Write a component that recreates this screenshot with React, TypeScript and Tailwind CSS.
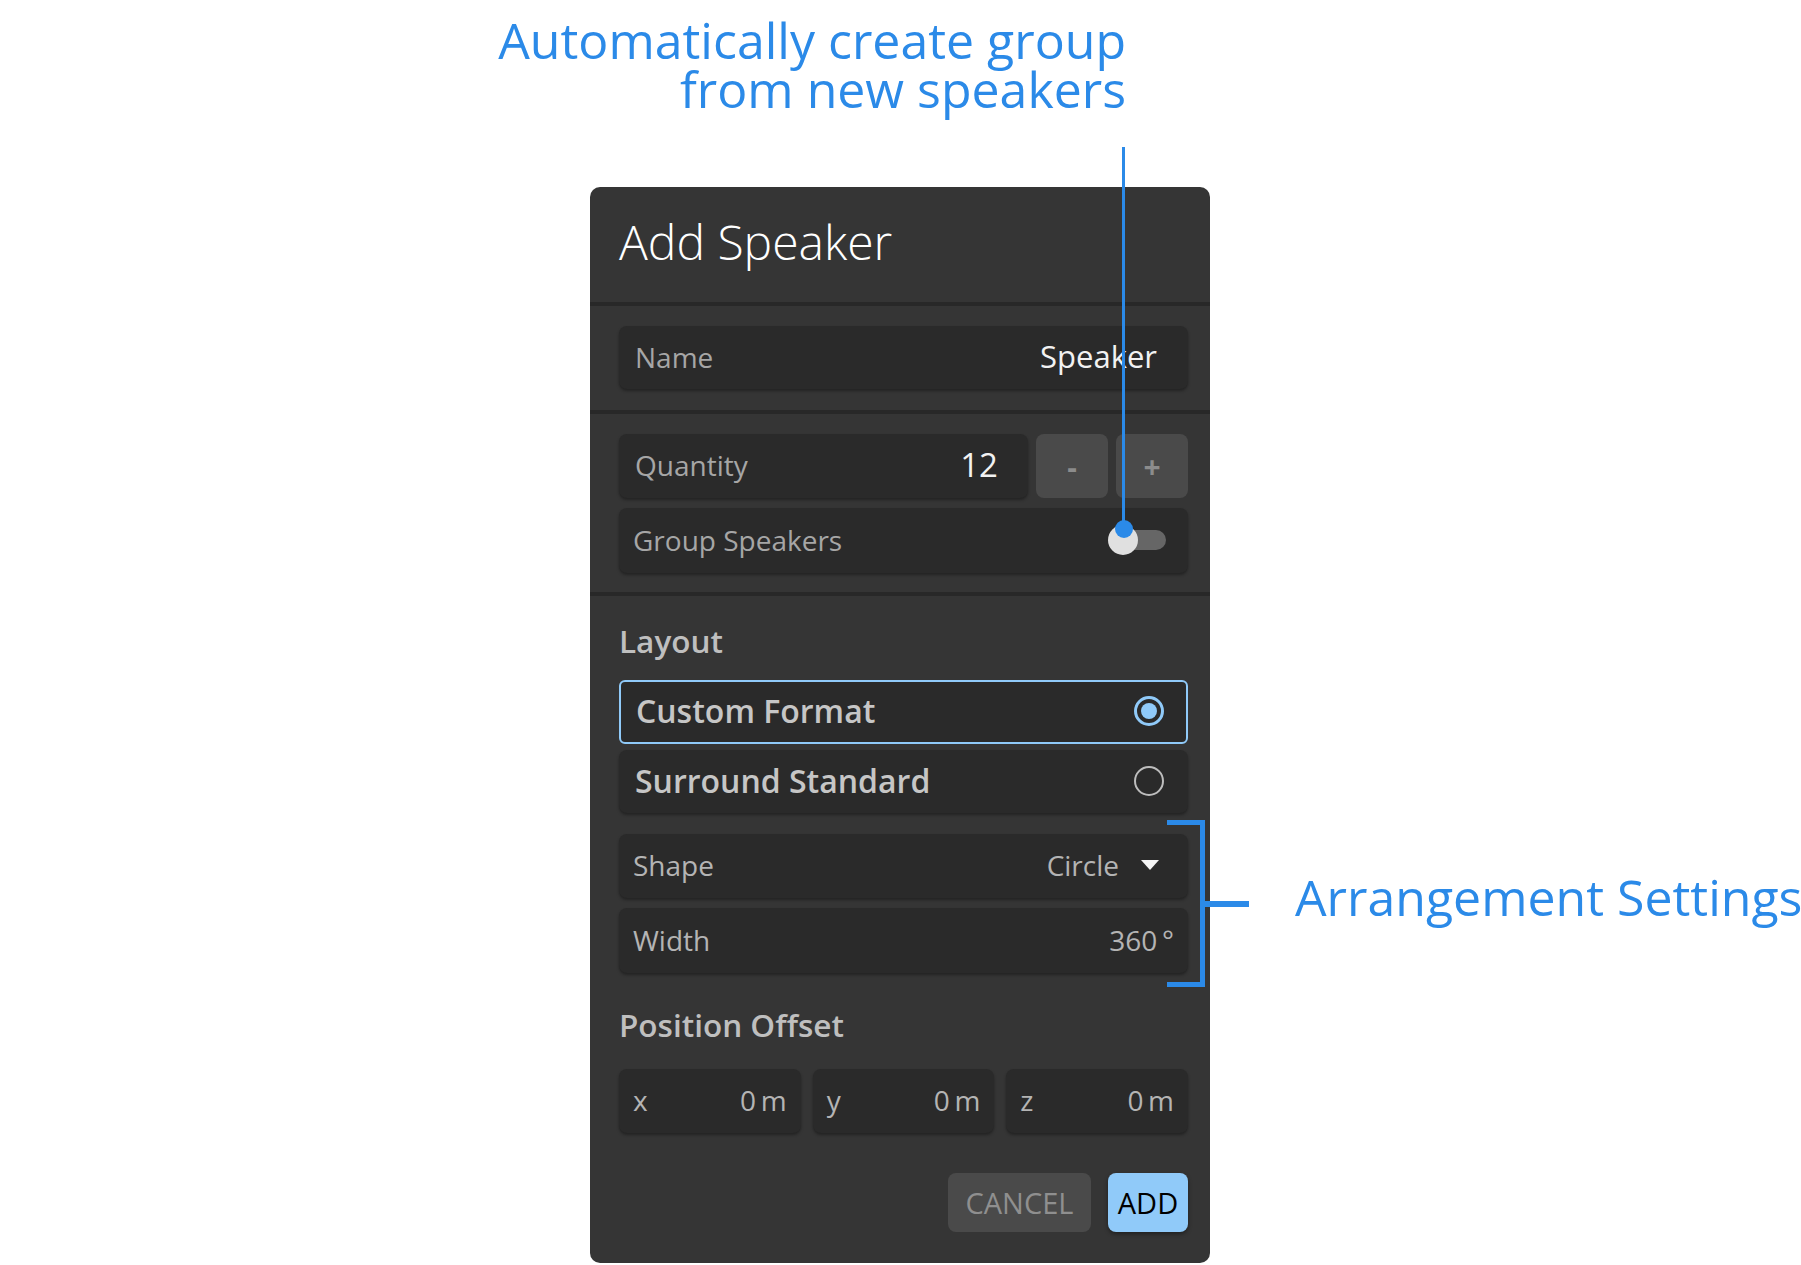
import { ReactNode } from "react";

// Add Speaker dialog with two blue call-outs

const font = { fontFamily: '"Open Sans", "Noto Sans", sans-serif' };

function Field({ children, className = "" }: { children: ReactNode; className?: string }) {
  return (
    <div
      className={`flex items-center justify-between rounded-[8px] bg-[#2a2a2a] pb-[2px] shadow-[0_2px_3px_rgba(0,0,0,0.35)] ${className}`}
    >
      {children}
    </div>
  );
}

function Radio({ on }: { on?: boolean }) {
  return on ? (
    <div className="flex h-[30px] w-[30px] items-center justify-center rounded-full border-[3px] border-[#90caf9]">
      <div className="h-[16px] w-[16px] rounded-full bg-[#90caf9]" />
    </div>
  ) : (
    <div className="h-[30px] w-[30px] rounded-full border-[2px] border-[#bdbdbd]" />
  );
}

function Toggle() {
  return (
    <div className="relative h-[30px] w-[58px]">
      <div className="absolute right-0 top-[5px] h-[20px] w-[43px] rounded-full bg-[#666666]" />
      <div className="absolute left-0 top-0 h-[30px] w-[30px] rounded-full bg-[#e0e0e0]" />
    </div>
  );
}

export default function App() {
  return (
    <div className="relative h-[1265px] w-[1801px] overflow-hidden bg-white" style={font}>
      {/* top call-out */}
      <div className="w-[1126px] pt-[16px] text-right text-[50px] leading-[49px] text-[#2b8ae8]">
        Automatically create group
        <br />
        from new speakers
      </div>

      {/* dialog */}
      <div className="ml-[590px] mt-[73px] flex h-[1076px] w-[620px] flex-col overflow-hidden rounded-[10px] bg-[#353535]">
        <div className="h-[115px] pl-[29px] pt-[31px] text-[48px] font-light leading-[48px] text-white">
          Add Speaker
        </div>
        <div className="h-[4px] bg-[#282828]" />

        <div className="pb-[21px] pl-[29px] pr-[22px] pt-[20px]">
          <Field className="h-[63px] pl-[16px] pr-[31px]">
            <span className="text-[28px] text-[#a6a6a6]">Name</span>
            <span className="text-[31px] text-[#f2f2f2]">Speaker</span>
          </Field>
        </div>
        <div className="h-[4px] bg-[#282828]" />

        <div className="flex flex-col gap-[10px] pb-[19px] pl-[29px] pr-[22px] pt-[20px]">
          <div className="flex h-[64px] gap-[8px]">
            <Field className="h-[64px] flex-1 pl-[16px] pr-[30px]">
              <span className="text-[28px] text-[#a6a6a6]">Quantity</span>
              <span className="text-[33px] text-[#f2f2f2]">12</span>
            </Field>
            <button className="flex h-[64px] w-[72px] items-center justify-center rounded-[8px] bg-[#4a4a4a] text-[30px] font-bold text-[#8c8c8c]">
              -
            </button>
            <button className="flex h-[64px] w-[72px] items-center justify-center rounded-[8px] bg-[#4a4a4a] text-[30px] font-bold text-[#8c8c8c]">
              +
            </button>
          </div>
          <Field className="h-[65px] pl-[14px] pr-[22px]">
            <span className="text-[28px] text-[#a6a6a6]">Group Speakers</span>
            <Toggle />
          </Field>
        </div>
        <div className="h-[4px] bg-[#282828]" />

        <div className="flex flex-1 flex-col pl-[29px] pr-[22px] pt-[29px]">
          <div className="h-[31px] text-[31.5px] font-semibold leading-[31px] text-[#bfbfbf]">Layout</div>
          <div className="mt-[24px] flex h-[64px] items-center justify-between rounded-[6px] border-[2px] border-[#90caf9] bg-[#2a2a2a] pb-[2px] pl-[15px] pr-[22px]">
            <span className="text-[32px] font-semibold text-[#c6c6c6]">Custom Format</span>
            <Radio on />
          </div>
          <Field className="mt-[6px] h-[63px] pl-[16px] pr-[24px]">
            <span className="text-[32px] font-semibold text-[#c6c6c6]">Surround Standard</span>
            <Radio />
          </Field>
          <Field className="mt-[21px] h-[64px] pl-[14px] pr-[29px]">
            <span className="text-[28px] text-[#b4b4b4]">Shape</span>
            <span className="flex items-center gap-[22px] text-[28px] text-[#b4b4b4]">
              Circle
              <svg width="18" height="10" viewBox="0 0 18 10">
                <path d="M0 0 L18 0 L9 10 Z" fill="#f5f5f5" />
              </svg>
            </span>
          </Field>
          <Field className="mt-[10px] h-[65px] pl-[14px] pr-[14px]">
            <span className="text-[28px] text-[#b4b4b4]">Width</span>
            <span className="text-[28px] text-[#b4b4b4]">360&#8201;°</span>
          </Field>

          <div className="mt-[36px] h-[31px] text-[31.5px] font-semibold leading-[31px] text-[#bfbfbf]">
            Position Offset
          </div>
          <div className="mt-[29px] grid grid-cols-3 gap-[12px]">
            {["x", "y", "z"].map((a) => (
              <Field key={a} className="h-[64px] pl-[14px] pr-[14px]">
                <span className="text-[28px] text-[#b4b4b4]">{a}</span>
                <span className="text-[28px] text-[#b4b4b4]">0&#8201;m</span>
              </Field>
            ))}
          </div>
          <div className="mt-[40px] flex justify-end gap-[17px]">
            <button className="h-[59px] w-[143px] rounded-[8px] bg-[#4a4a4a] text-[29px] text-[#8f8f8f]">
              CANCEL
            </button>
            <button className="h-[59px] w-[80px] rounded-[8px] bg-[#90caf9] text-[29px] font-medium text-black shadow-[0_2px_4px_rgba(0,0,0,0.4)]">
              ADD
            </button>
          </div>
        </div>
      </div>

      {/* call-out line to the toggle */}
      <div className="absolute left-[1122px] top-[147px] h-[382px] w-[3px] bg-[#2b8ae8]" />
      <div className="absolute left-[1115px] top-[520px] h-[18px] w-[18px] rounded-full bg-[#2b8ae8]" />

      {/* bracket for arrangement settings */}
      <div className="absolute left-[1167px] top-[820px] h-[167px] w-[38px] border-y-[5px] border-r-[5px] border-[#2b8ae8]" />
      <div className="absolute left-[1205px] top-[901px] h-[6px] w-[44px] bg-[#2b8ae8]" />
      <div className="absolute left-[1295px] top-[873px] whitespace-nowrap text-[50px] leading-[49px] text-[#2b8ae8]">
        Arrangement Settings
      </div>
    </div>
  );
}
